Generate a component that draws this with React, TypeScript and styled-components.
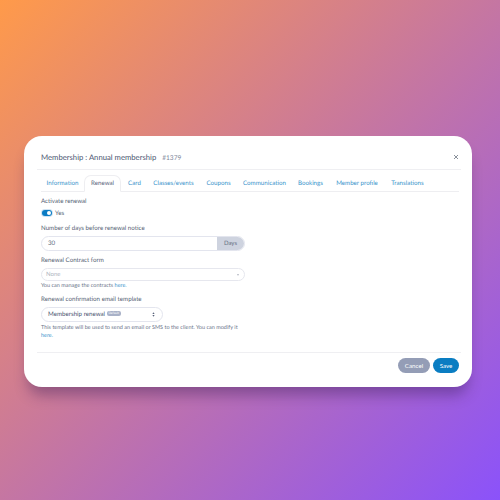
import React from 'react'
import styled, { createGlobalStyle } from 'styled-components'

const GlobalStyle = createGlobalStyle`
  html, body { margin: 0; padding: 0; }
  body {
    font-family: "Lato", "Noto Sans", sans-serif;
    text-rendering: geometricPrecision;
  }
`

const Page = styled.div`
  width: 500px;
  height: 500px;
  overflow: hidden;
  background: linear-gradient(135deg, #ff9a4a 0%, #8b52fa 100%);
  padding: 136px 28px 113px 24px;
  box-sizing: border-box;
`

const Modal = styled.div`
  width: 448px;
  height: 251px;
  background: #fff;
  border-radius: 18px;
  box-shadow: 0 12px 14px -4px rgba(60, 30, 90, 0.42);
  padding: 0 11px 0 13px;
  box-sizing: border-box;
  display: flex;
  flex-direction: column;
`

const Header = styled.div`
  height: 34px;
  padding: 9px 2px 0 4px;
  display: flex;
  align-items: center;
  justify-content: space-between;
  border-bottom: 1px solid #efeff2;
  box-sizing: border-box;
  flex: none;
`

const Title = styled.div`
  font-size: 7.7px;
  color: #4a5570;
  span {
    margin-left: 4px;
    font-size: 6.6px;
    color: #7b8498;
  }
`

const Close = styled.svg`
  width: 6px;
  height: 6px;
  stroke: #7d8490;
  stroke-width: 0.9;
  fill: none;
`

const Tabs = styled.div`
  margin: 6px 2px 0 4px;
  height: 16px;
  display: flex;
  align-items: stretch;
  border-bottom: 1px solid #eeeef1;
  box-sizing: border-box;
  flex: none;
`

const Tab = styled.div<{ $active?: boolean; $w: number }>`
  width: ${p => p.$w}px;
  flex: none;
  font-size: 6.2px;
  display: flex;
  align-items: center;
  justify-content: center;
  box-sizing: border-box;
  color: ${p => (p.$active ? '#5a647c' : '#3a93cb')};
  ${p =>
    p.$active &&
    `
    background: #fff;
    border: 1px solid #eeeef1;
    border-bottom: 1px solid #fff;
    border-radius: 7px 7px 0 0;
    margin: -1px 0 -1px;
  `}
`

const Body = styled.div`
  flex: 1;
  padding: 6px 0 0 4px;
  display: flex;
  flex-direction: column;
  align-items: flex-start;
`

const Label = styled.div<{ $gap?: number }>`
  font-size: 6.2px;
  line-height: 8px;
  color: #565f75;
  margin-top: ${p => p.$gap ?? 0}px;
`

const ToggleRow = styled.div`
  display: flex;
  align-items: center;
  gap: 3px;
  height: 8px;
  margin-top: 3px;
  margin-bottom: 8px;
  font-size: 6.2px;
  color: #565f75;
`

const Toggle = styled.div`
  width: 10px;
  height: 6px;
  margin-left: 1px;
  border-radius: 3px;
  background: #0a7cc4;
  box-shadow: 0 0 0 1px #cfe3f3;
  position: relative;
  &::after {
    content: '';
    position: absolute;
    right: 1px;
    top: 1px;
    width: 4px;
    height: 4px;
    border-radius: 50%;
    background: #fff;
  }
`

const InputGroup = styled.div`
  width: 204px;
  height: 15px;
  margin-top: 3px;
  margin-bottom: 6px;
  display: flex;
  border-radius: 8px;
  overflow: hidden;
  border: 1px solid #e3e5ee;
  box-sizing: border-box;
`

const InputValue = styled.div`
  flex: 1;
  padding-left: 6px;
  font-size: 6.2px;
  line-height: 13px;
  color: #666f83;
`

const Addon = styled.div`
  width: 27px;
  background: #ced3df;
  font-size: 6px;
  line-height: 13px;
  text-align: center;
  color: #666f83;
`

const SelectBox = styled.div`
  width: 204px;
  height: 13px;
  margin-top: 3px;
  border: 1px solid #e6e7ee;
  border-radius: 7px;
  box-sizing: border-box;
  padding: 0 5px 0 4px;
  display: flex;
  align-items: center;
  justify-content: space-between;
  font-size: 6px;
  color: #b0b5bf;
`

const Caret = styled.div`
  width: 0;
  height: 0;
  border-left: 1.6px solid transparent;
  border-right: 1.6px solid transparent;
  border-top: 2px solid #b4b8c2;
`

const Help = styled.div<{ $gap: number; $w?: number }>`
  margin-top: ${p => p.$gap}px;
  font-size: 5.5px;
  line-height: 8px;
  color: #6a7389;
  ${p => p.$w && `width: ${p.$w}px;`}
  a {
    color: #3a93cb;
    text-decoration: none;
  }
`

const TemplateSelect = styled.div`
  width: 122px;
  height: 15px;
  margin-top: 3px;
  border: 1px solid #e3e5ee;
  border-radius: 8px;
  box-sizing: border-box;
  padding: 0 7px 0 6px;
  display: flex;
  align-items: center;
  justify-content: space-between;
  font-size: 6.2px;
  color: #4a5570;
`

const Badge = styled.span`
  display: inline-block;
  vertical-align: 2px;
  margin-left: 0;
  width: 14px;
  height: 4.5px;
  line-height: 4.5px;
  text-align: center;
  font-size: 3.2px;
  border-radius: 2px;
  background: #a9b2c8;
  color: #fff;
`

const Sort = styled.svg`
  width: 3px;
  height: 5px;
  fill: #5a647c;
`

const Footer = styled.div`
  border-top: 1px solid #efeff2;
  height: 35px;
  display: flex;
  align-items: flex-start;
  justify-content: flex-end;
  gap: 3px;
  padding: 5px 2px 0 0;
  box-sizing: border-box;
  flex: none;
`

const Button = styled.button<{ $primary?: boolean }>`
  height: 15px;
  width: ${p => (p.$primary ? 26 : 32)}px;
  border: none;
  padding: 0;
  border-radius: 8px;
  font-family: inherit;
  font-size: 6.2px;
  color: #fff;
  background: ${p => (p.$primary ? '#0a7dc2' : '#949db6')};
`

const tabs: [string, number][] = [
  ['Information', 43],
  ['Renewal', 37],
  ['Card', 27],
  ['Classes/events', 51],
  ['Coupons', 39],
  ['Communication', 53],
  ['Bookings', 39],
  ['Member profile', 54],
  ['Translations', 47],
]

export default function App() {
  return (
    <Page>
      <GlobalStyle />
      <Modal>
        <Header>
          <Title>
            Membership : Annual membership <span>#1379</span>
          </Title>
          <Close viewBox="0 0 6 6">
            <path d="M1 1l4 4M5 1L1 5" />
          </Close>
        </Header>
        <Tabs>
          {tabs.map(([name, w]) => (
            <Tab key={name} $w={w} $active={name === 'Renewal'}>
              {name}
            </Tab>
          ))}
        </Tabs>
        <Body>
          <Label>Activate renewal</Label>
          <ToggleRow>
            <Toggle />
            Yes
          </ToggleRow>
          <Label>Number of days before renewal notice</Label>
          <InputGroup>
            <InputValue>30</InputValue>
            <Addon>Days</Addon>
          </InputGroup>
          <Label>Renewal Contract form</Label>
          <SelectBox>
            None
            <Caret />
          </SelectBox>
          <Help $gap={1}>
            You can manage the contracts <a>here.</a>
          </Help>
          <Label $gap={6}>Renewal confirmation email template</Label>
          <TemplateSelect>
            <span>
              Membership renewal <Badge>Default</Badge>
            </span>
            <Sort viewBox="0 0 4 6">
              <path d="M2 0l1.500 2.300h-3zM2 6L.5 3.700h3z" />
            </Sort>
          </TemplateSelect>
          <Help $gap={2} $w={204}>
            This template will be used to send an email or SMS to the client. You can modify it <a>here.</a>
          </Help>
        </Body>
        <Footer>
          <Button>Cancel</Button>
          <Button $primary>Save</Button>
        </Footer>
      </Modal>
    </Page>
  )
}
